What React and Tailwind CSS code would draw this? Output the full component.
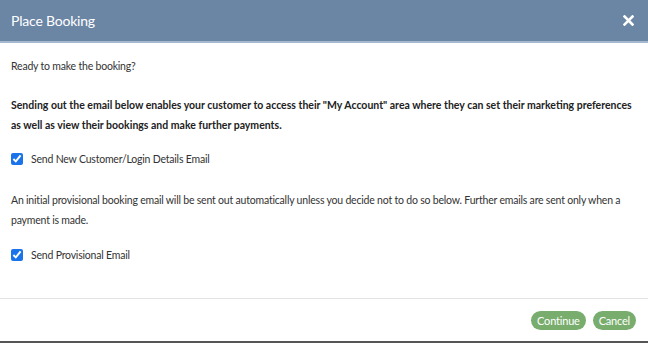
export default function App() {
  return (
    <div className="w-[648px] h-[343px] bg-white flex flex-col font-['Lato',sans-serif] text-[#333]">
      <div className="h-[43px] shrink-0 bg-[#6b85a5] border-b-2 border-[#a6b8cf] flex items-center justify-between pl-[11px] pr-[14px]">
        <h1 className="text-[14px] tracking-[-0.2px] text-white">Place Booking</h1>
        <button className="text-white">
          <svg width="11" height="11" viewBox="0 0 11 11">
            <path d="M1.5 1.5 L9.5 9.5 M9.5 1.5 L1.5 9.5" stroke="white" strokeWidth="2.6" strokeLinecap="square" />
          </svg>
        </button>
      </div>
      <div className="flex-1 px-[11px] pt-[13px] text-[10.5px] tracking-[-0.2px] leading-[20px]">
        <p>Ready to make the booking?</p>
        <p className="mt-[19px] font-bold tracking-[0px] text-[#222]">
          Sending out the email below enables your customer to access their "My Account" area where they can set their marketing preferences as well as view their bookings and make further payments.
        </p>
        <label className="mt-[14px] flex items-center gap-[8px]">
          <input type="checkbox" defaultChecked className="w-[12px] h-[12px] m-0 accent-[#1a73e8]" />
          <span>Send New Customer/Login Details Email</span>
        </label>
        <p className="mt-[21px]">
          An initial provisional booking email will be sent out automatically unless you decide not to do so below. Further emails are sent only when a payment is made.
        </p>
        <label className="mt-[15px] flex items-center gap-[8px]">
          <input type="checkbox" defaultChecked className="w-[12px] h-[12px] m-0 accent-[#1a73e8]" />
          <span>Send Provisional Email</span>
        </label>
      </div>
      <div className="h-[45px] shrink-0 border-t border-[#e3e3e3] border-b-2 border-b-[#555] flex items-center justify-end gap-[7px] pr-[12px]">
        <button className="h-[19px] px-[6px] rounded-full bg-[#78ad6d] text-white text-[11px] tracking-[-0.2px] leading-none">Continue</button>
        <button className="h-[19px] px-[6px] rounded-full bg-[#78ad6d] text-white text-[11px] tracking-[-0.2px] leading-none">Cancel</button>
      </div>
    </div>
  )
}
